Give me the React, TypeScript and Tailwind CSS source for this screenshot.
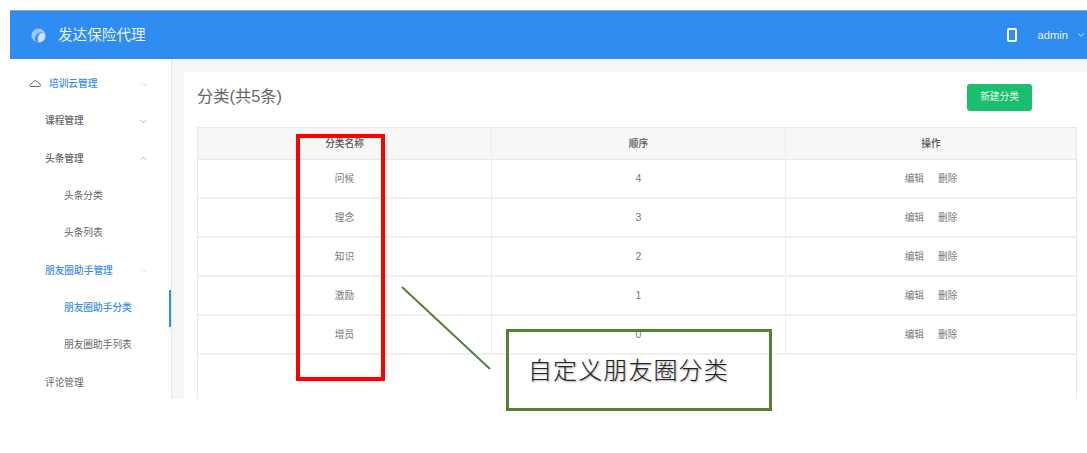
import React from "react";
import { ChevronDown, ChevronUp } from "lucide-react";

const FONT = "[font-family:'Liberation_Sans','Noto_Sans_CJK_SC',sans-serif]";

function MenuRow({ label, pad, active, bold, chevron, selected, icon }: { label: string; pad: string; active?: boolean; bold?: boolean; chevron?: "up" | "down"; selected?: boolean; icon?: boolean }) {
  const Chevron = chevron === "up" ? ChevronUp : ChevronDown;
  return (
    <div className={`relative flex h-[37.33px] shrink-0 items-center ${pad} pr-[22px] text-[9.7px] ${active ? "text-[#3a8ee6]" : "text-[#666666]"} ${bold ? "font-medium" : ""}`}>
      {icon && (
        <svg className="mb-[2px] mr-[8px] h-[8px] w-[12px] text-[#666666]" viewBox="0 0 12 8" fill="none" stroke="currentColor" strokeWidth="1">
          <path d="M1.500 7.500H10.500C12 7.500 12 4.800 10 4.800C9.500 1.500 4 0.500 3 4.500C0.800 4.500 0.300 7.500 1.500 7.500Z" />
        </svg>
      )}
      <span className="flex-1 whitespace-nowrap">{label}</span>
      {chevron && <Chevron className={`h-[11px] w-[11px] ${active ? "text-[#a3c6f2]" : "text-[#888888]"}`} strokeWidth={1.3} />}
      {selected && <span className="absolute right-0 top-0 h-full w-[2px] bg-[#2d8cf0]" />}
    </div>
  );
}

const rows = [
  ["问候", "4"],
  ["理念", "3"],
  ["知识", "2"],
  ["激励", "1"],
  ["增员", "0"],
];

function Row({ name, order }: { name: string; order: string }) {
  return (
    <div className="grid h-[39px] grid-cols-[294px_294px_1fr] border-b-2 border-[#f0f0f0] text-[9.7px] text-[#777777]">
      <div className="flex items-center justify-center border-r border-[#ececec] pt-[2px]">{name}</div>
      <div className="flex items-center justify-center border-r border-[#ececec] pt-[1px] text-[10.5px]">{order}</div>
      <div className="flex items-center justify-center gap-[14px] pt-[2px]">
        <span>编辑</span>
        <span>删除</span>
      </div>
    </div>
  );
}

export default function App() {
  return (
    <div className={`relative h-[453px] w-[1087px] overflow-hidden bg-white ${FONT}`}>
      <div className="ml-[10px] mt-[10px] flex h-[389px] flex-col overflow-hidden">
        <header className="flex h-[49px] shrink-0 items-center border-t border-[#7fa9d8] bg-[#2f8cf0] text-white">
          <svg className="ml-[21px] h-[15px] w-[15px]" viewBox="0 0 15 15">
            <circle cx="7.500" cy="7.500" r="7" fill="#9cc6f5" />
            <path d="M4.500 13.500C2.500 8 6.500 2.800 12.500 5C8.500 3.800 5.500 8 7.500 14.200Z" fill="#3f93ee" />
            <path d="M7.500 14.200C6 9 9 4.800 12.500 5C14 6.500 14.500 9 14 10.500C13 12.800 10 14.500 7.500 14.200Z" fill="#cfe4fb" />
          </svg>
          <span className="ml-[12px] pt-[1px] text-[14.6px] text-[#e8f2fd]">发达保险代理</span>
          <div className="ml-auto flex items-center">
            <svg className="h-[14px] w-[10px]" viewBox="0 0 10 14">
              <rect x="1" y="1" width="8" height="12" rx="1" fill="none" stroke="white" strokeWidth="2" />
            </svg>
            <span className="ml-[21px] text-[11.2px] text-[#e8f2fd]">admin</span>
            <ChevronDown className="ml-[8px] mr-[1px] h-[10px] w-[10px] text-white" strokeWidth={1.8} />
          </div>
        </header>
        <div className="flex min-h-0 flex-1">
          <aside className="w-[162px] shrink-0 border-r border-[#e6e6e6] pt-[6.600px]">
            <MenuRow label="培训云管理" pad="pl-[19px]" active chevron="up" icon bold />
            <MenuRow label="课程管理" pad="pl-[35px]" chevron="down" bold />
            <MenuRow label="头条管理" pad="pl-[35px]" chevron="up" bold />
            <MenuRow label="头条分类" pad="pl-[54px]" />
            <MenuRow label="头条列表" pad="pl-[54px]" />
            <MenuRow label="朋友圈助手管理" pad="pl-[35px]" active chevron="up" bold />
            <MenuRow label="朋友圈助手分类" pad="pl-[54px]" active selected bold />
            <MenuRow label="朋友圈助手列表" pad="pl-[54px]" />
            <MenuRow label="评论管理" pad="pl-[35px]" />
          </aside>
          <main className="min-w-0 flex-1 bg-[#f6f6f6] pl-[12px] pt-[13px]">
            <div className="h-full bg-white pl-[13px] pr-[10px]">
              <div className="flex h-[55px] items-center pb-[5px]">
                <span className="mb-[2px] w-[86px] whitespace-nowrap text-[16.3px] text-[#666666]">分类(共5条)</span>
                <button className="ml-[684px] h-[27px] w-[65px] rounded-[3px] bg-[#1bbf6b] text-[9.7px] text-[#e8fbf1]">新建分类</button>
              </div>
              <div className="h-[400px] border-x border-t border-[#e8e8e8]">
                <div className="grid h-[32px] grid-cols-[294px_294px_1fr] border-b border-[#e8e8e8] bg-[#f7f7f7] text-[9.7px] font-medium text-[#555555]">
                  <div className="flex items-center justify-center border-r border-[#ececec] pt-[1px]">分类名称</div>
                  <div className="flex items-center justify-center border-r border-[#ececec] pt-[1px]">顺序</div>
                  <div className="flex items-center justify-center pt-[1px]">操作</div>
                </div>
                {rows.map(([name, order]) => (
                  <Row key={name} name={name} order={order} />
                ))}
              </div>
            </div>
          </main>
        </div>
      </div>
      {/* annotations laid over the screenshot */}
      <div className="absolute left-[296px] top-[134px] h-[247px] w-[89px] border-4 border-[#ff0000]" />
      <svg className="absolute left-[400px] top-[285px] h-[86px] w-[92px]" viewBox="0 0 92 86">
        <line x1="2" y1="2" x2="90" y2="84" stroke="#548235" strokeWidth="2" />
      </svg>
      <div className="absolute left-[506px] top-[329px] flex h-[82px] w-[266px] border-[3px] border-[#548235] pl-[19px] pt-[20px]">
        <span className="whitespace-nowrap text-[24px] leading-[34px] tracking-[1.100px] text-[#222222] [font-family:'Noto_Sans_CJK_SC',sans-serif] font-light [text-shadow:1px_1px_2px_rgba(0,0,0,0.35)]">自定义朋友圈分类</span>
      </div>
    </div>
  );
}
